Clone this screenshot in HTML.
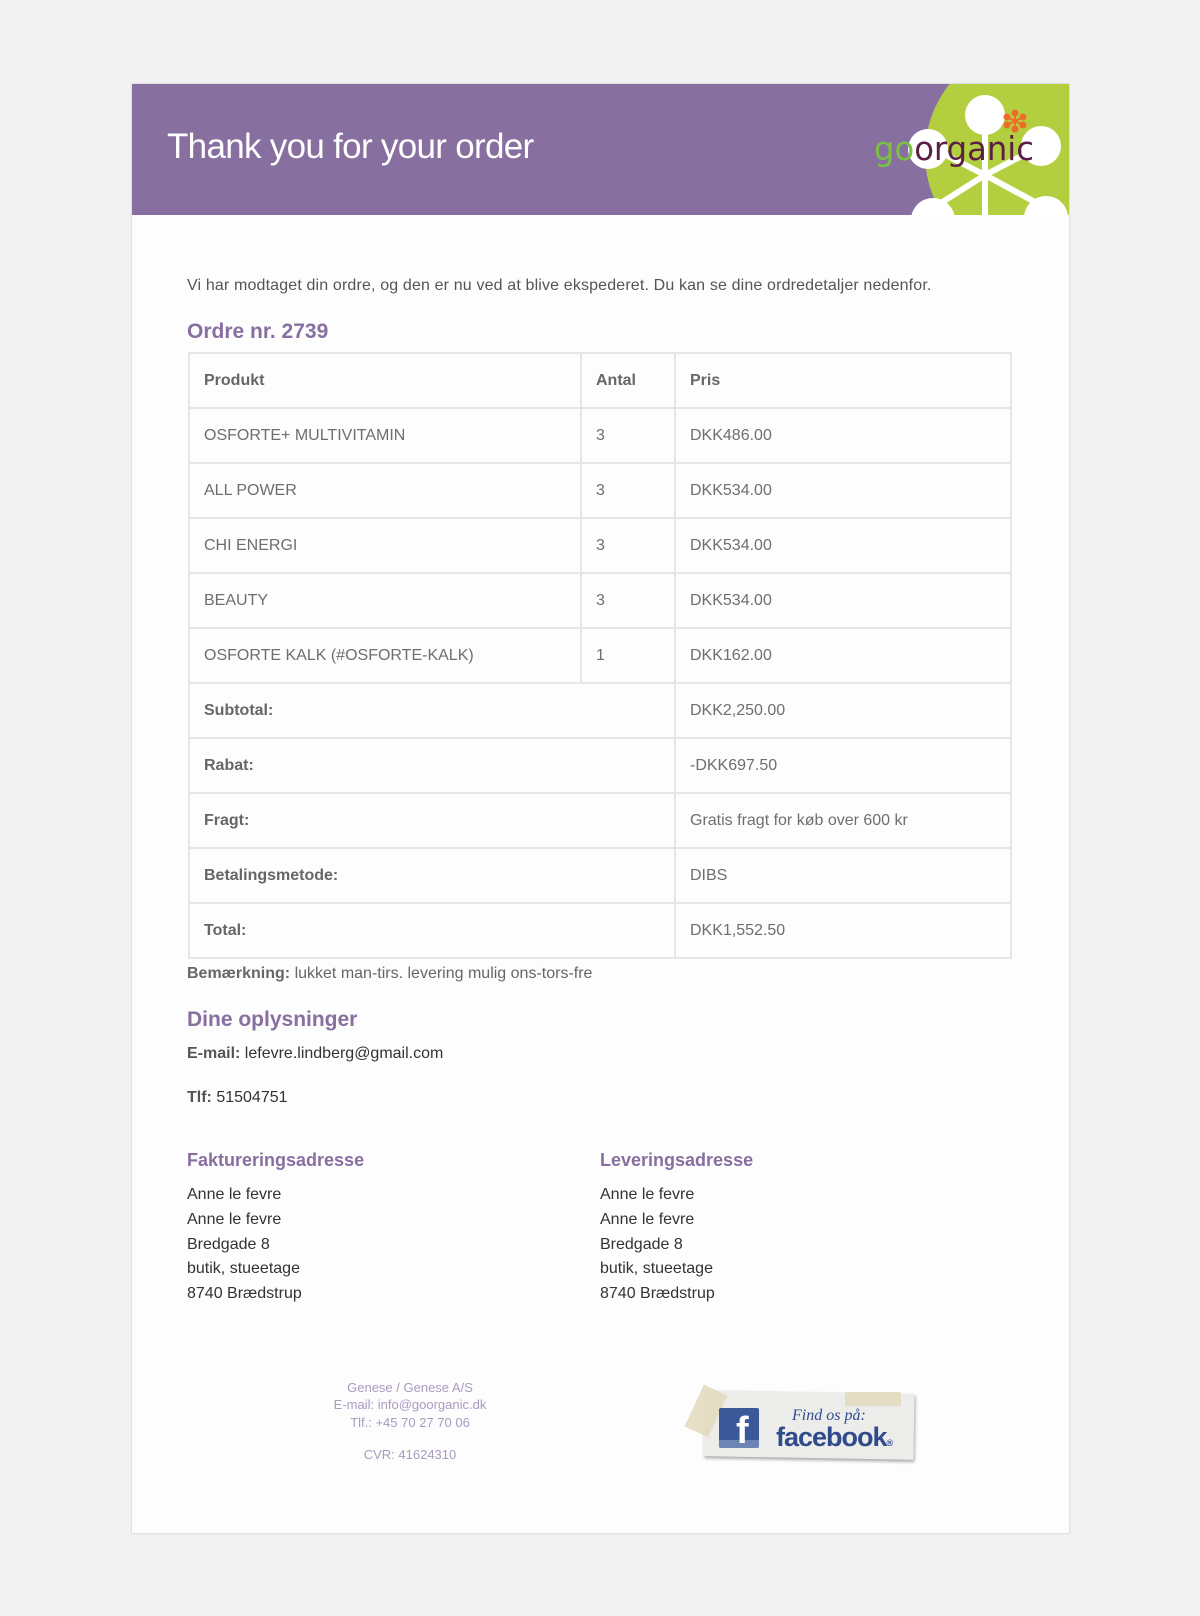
<!DOCTYPE html>
<html><head><meta charset="utf-8"><style>
*{margin:0;padding:0;box-sizing:border-box}
body{width:1200px;height:1616px;background:#f2f2f2;font-family:"Liberation Sans",Arial,sans-serif;position:relative;overflow:hidden}
.card{position:absolute;left:131px;top:83px;width:939px;height:1451px;background:#fdfdfd;border:1px solid #e2e2e2;box-shadow:0 0 2px rgba(0,0,0,.06)}
.hdr{position:absolute;left:132px;top:84px;width:937px;height:131px;background:#876fa0;overflow:hidden}
.t{position:absolute;line-height:1;white-space:nowrap}
table{position:absolute;left:188px;top:352px;width:824px;border-collapse:collapse;font-size:16px;color:#6e6e6e}
td{border:2px solid #e6e6e6;height:55px;padding:0 14px;vertical-align:middle}
td b{color:#666}
.h{color:#876fa0;font-weight:bold}
.ft{position:absolute;left:300px;width:220px;text-align:center;font-size:13px;color:#a99bbf;line-height:1}
</style></head><body>
<div class="card"></div>
<div class="hdr">
<svg width="937" height="131" style="position:absolute;left:0;top:0">
<circle cx="905" cy="70" r="112" fill="#b3cf3f"/>
<g stroke="#fff" stroke-width="6" fill="#fff">
<line x1="853" y1="40" x2="853" y2="131"/>
<line x1="853" y1="91" x2="909" y2="62"/>
<line x1="853" y1="91" x2="796" y2="62"/>
<line x1="853" y1="91" x2="801" y2="124"/>
<line x1="853" y1="91" x2="914" y2="124"/>
<circle cx="853" cy="31" r="20" stroke="none"/>
<circle cx="796" cy="65" r="20" stroke="none"/>
<circle cx="909" cy="62" r="20" stroke="none"/>
<circle cx="801" cy="136" r="22" stroke="none"/>
<circle cx="914" cy="134" r="22" stroke="none"/>
</g>
<g stroke="#ef6b2a" stroke-width="2" fill="#ef6b2a">
<line x1="883" y1="29" x2="883" y2="45"/><line x1="875" y1="33" x2="891" y2="41"/><line x1="891" y1="33" x2="875" y2="41"/>
<circle cx="883" cy="29" r="2.5"/><circle cx="883" cy="45" r="2.5"/><circle cx="875" cy="33" r="2.5"/><circle cx="891" cy="41" r="2.5"/><circle cx="891" cy="33" r="2.5"/><circle cx="875" cy="41" r="2.5"/>
</g>
<text x="742" y="76" font-family="DejaVu Sans, sans-serif" font-size="33" fill="#7ac143" textLength="160" lengthAdjust="spacingAndGlyphs">go<tspan fill="#5b1f45">organic</tspan></text>
</svg>
<div class="t" style="left:35px;top:45px;font-size:35px;color:#fff;letter-spacing:-0.7px">Thank you for your order</div>
</div>

<div class="t" style="left:187px;top:278px;font-size:16px;color:#555;letter-spacing:0.15px">Vi har modtaget din ordre, og den er nu ved at blive ekspederet. Du kan se dine ordredetaljer nedenfor.</div>
<div class="t h" style="left:187px;top:321px;font-size:21px">Ordre nr. 2739</div>

<table>
<tr><td style="width:392px"><b>Produkt</b></td><td style="width:94px"><b>Antal</b></td><td><b>Pris</b></td></tr>
<tr><td>OSFORTE+ MULTIVITAMIN</td><td>3</td><td>DKK486.00</td></tr>
<tr><td>ALL POWER</td><td>3</td><td>DKK534.00</td></tr>
<tr><td>CHI ENERGI</td><td>3</td><td>DKK534.00</td></tr>
<tr><td>BEAUTY</td><td>3</td><td>DKK534.00</td></tr>
<tr><td>OSFORTE KALK (#OSFORTE-KALK)</td><td>1</td><td>DKK162.00</td></tr>
<tr><td colspan="2"><b>Subtotal:</b></td><td>DKK2,250.00</td></tr>
<tr><td colspan="2"><b>Rabat:</b></td><td>-DKK697.50</td></tr>
<tr><td colspan="2"><b>Fragt:</b></td><td>Gratis fragt for køb over 600 kr</td></tr>
<tr><td colspan="2"><b>Betalingsmetode:</b></td><td>DIBS</td></tr>
<tr><td colspan="2"><b>Total:</b></td><td>DKK1,552.50</td></tr>
</table>

<div class="t" style="left:187px;top:966px;font-size:16px;color:#666"><b>Bemærkning:</b> lukket man-tirs. levering mulig ons-tors-fre</div>
<div class="t h" style="left:187px;top:1009px;font-size:21px">Dine oplysninger</div>
<div class="t" style="left:187px;top:1046px;font-size:16px;color:#333"><b style="color:#555">E-mail:</b> lefevre.lindberg@gmail.com</div>
<div class="t" style="left:187px;top:1090px;font-size:16px;color:#333"><b style="color:#555">Tlf:</b> 51504751</div>

<div class="t h" style="left:187px;top:1151px;font-size:18px">Faktureringsadresse</div>
<div class="t h" style="left:600px;top:1151px;font-size:18px">Leveringsadresse</div>
<div style="position:absolute;left:187px;top:1183px;font-size:16px;line-height:24.8px;color:#333">Anne le fevre<br>Anne le fevre<br>Bredgade 8<br>butik, stueetage<br>8740 Brædstrup</div>
<div style="position:absolute;left:600px;top:1183px;font-size:16px;line-height:24.8px;color:#333">Anne le fevre<br>Anne le fevre<br>Bredgade 8<br>butik, stueetage<br>8740 Brædstrup</div>

<div class="ft" style="top:1381px">Genese / Genese A/S</div>
<div class="ft" style="top:1398px">E-mail: info@goorganic.dk</div>
<div class="ft" style="top:1416px">Tlf.: +45 70 27 70 06</div>
<div class="ft" style="top:1448px">CVR: 41624310</div>

<div style="position:absolute;left:704px;top:1392px;width:210px;height:66px;background:#ececea;box-shadow:1px 2px 3px rgba(0,0,0,.35);transform:rotate(1deg)"></div>
<div style="position:absolute;left:693px;top:1388px;width:26px;height:46px;background:#e3dcc0;opacity:.9;transform:rotate(25deg)"></div>
<div style="position:absolute;left:845px;top:1392px;width:56px;height:14px;background:#e3dcc0;opacity:.9"></div>
<div style="position:absolute;left:719px;top:1408px;width:40px;height:40px;background:#3b5998;border-radius:2px;overflow:hidden"><div style="position:absolute;left:0;bottom:0;width:40px;height:8px;background:#6d84b4"></div><div style="position:absolute;left:17px;top:4px;font:bold 38px 'Liberation Sans',sans-serif;color:#fff;line-height:1">f</div></div>
<div class="t" style="left:792px;top:1407px;font:italic 16px 'Liberation Serif',serif;color:#2f4b8c">Find os på:</div>
<div class="t" style="left:776px;top:1422px;font:bold 27px 'Liberation Sans',sans-serif;color:#2f4b8c;letter-spacing:-1px">facebook<span style="font-size:9px">®</span></div>
</body></html>
